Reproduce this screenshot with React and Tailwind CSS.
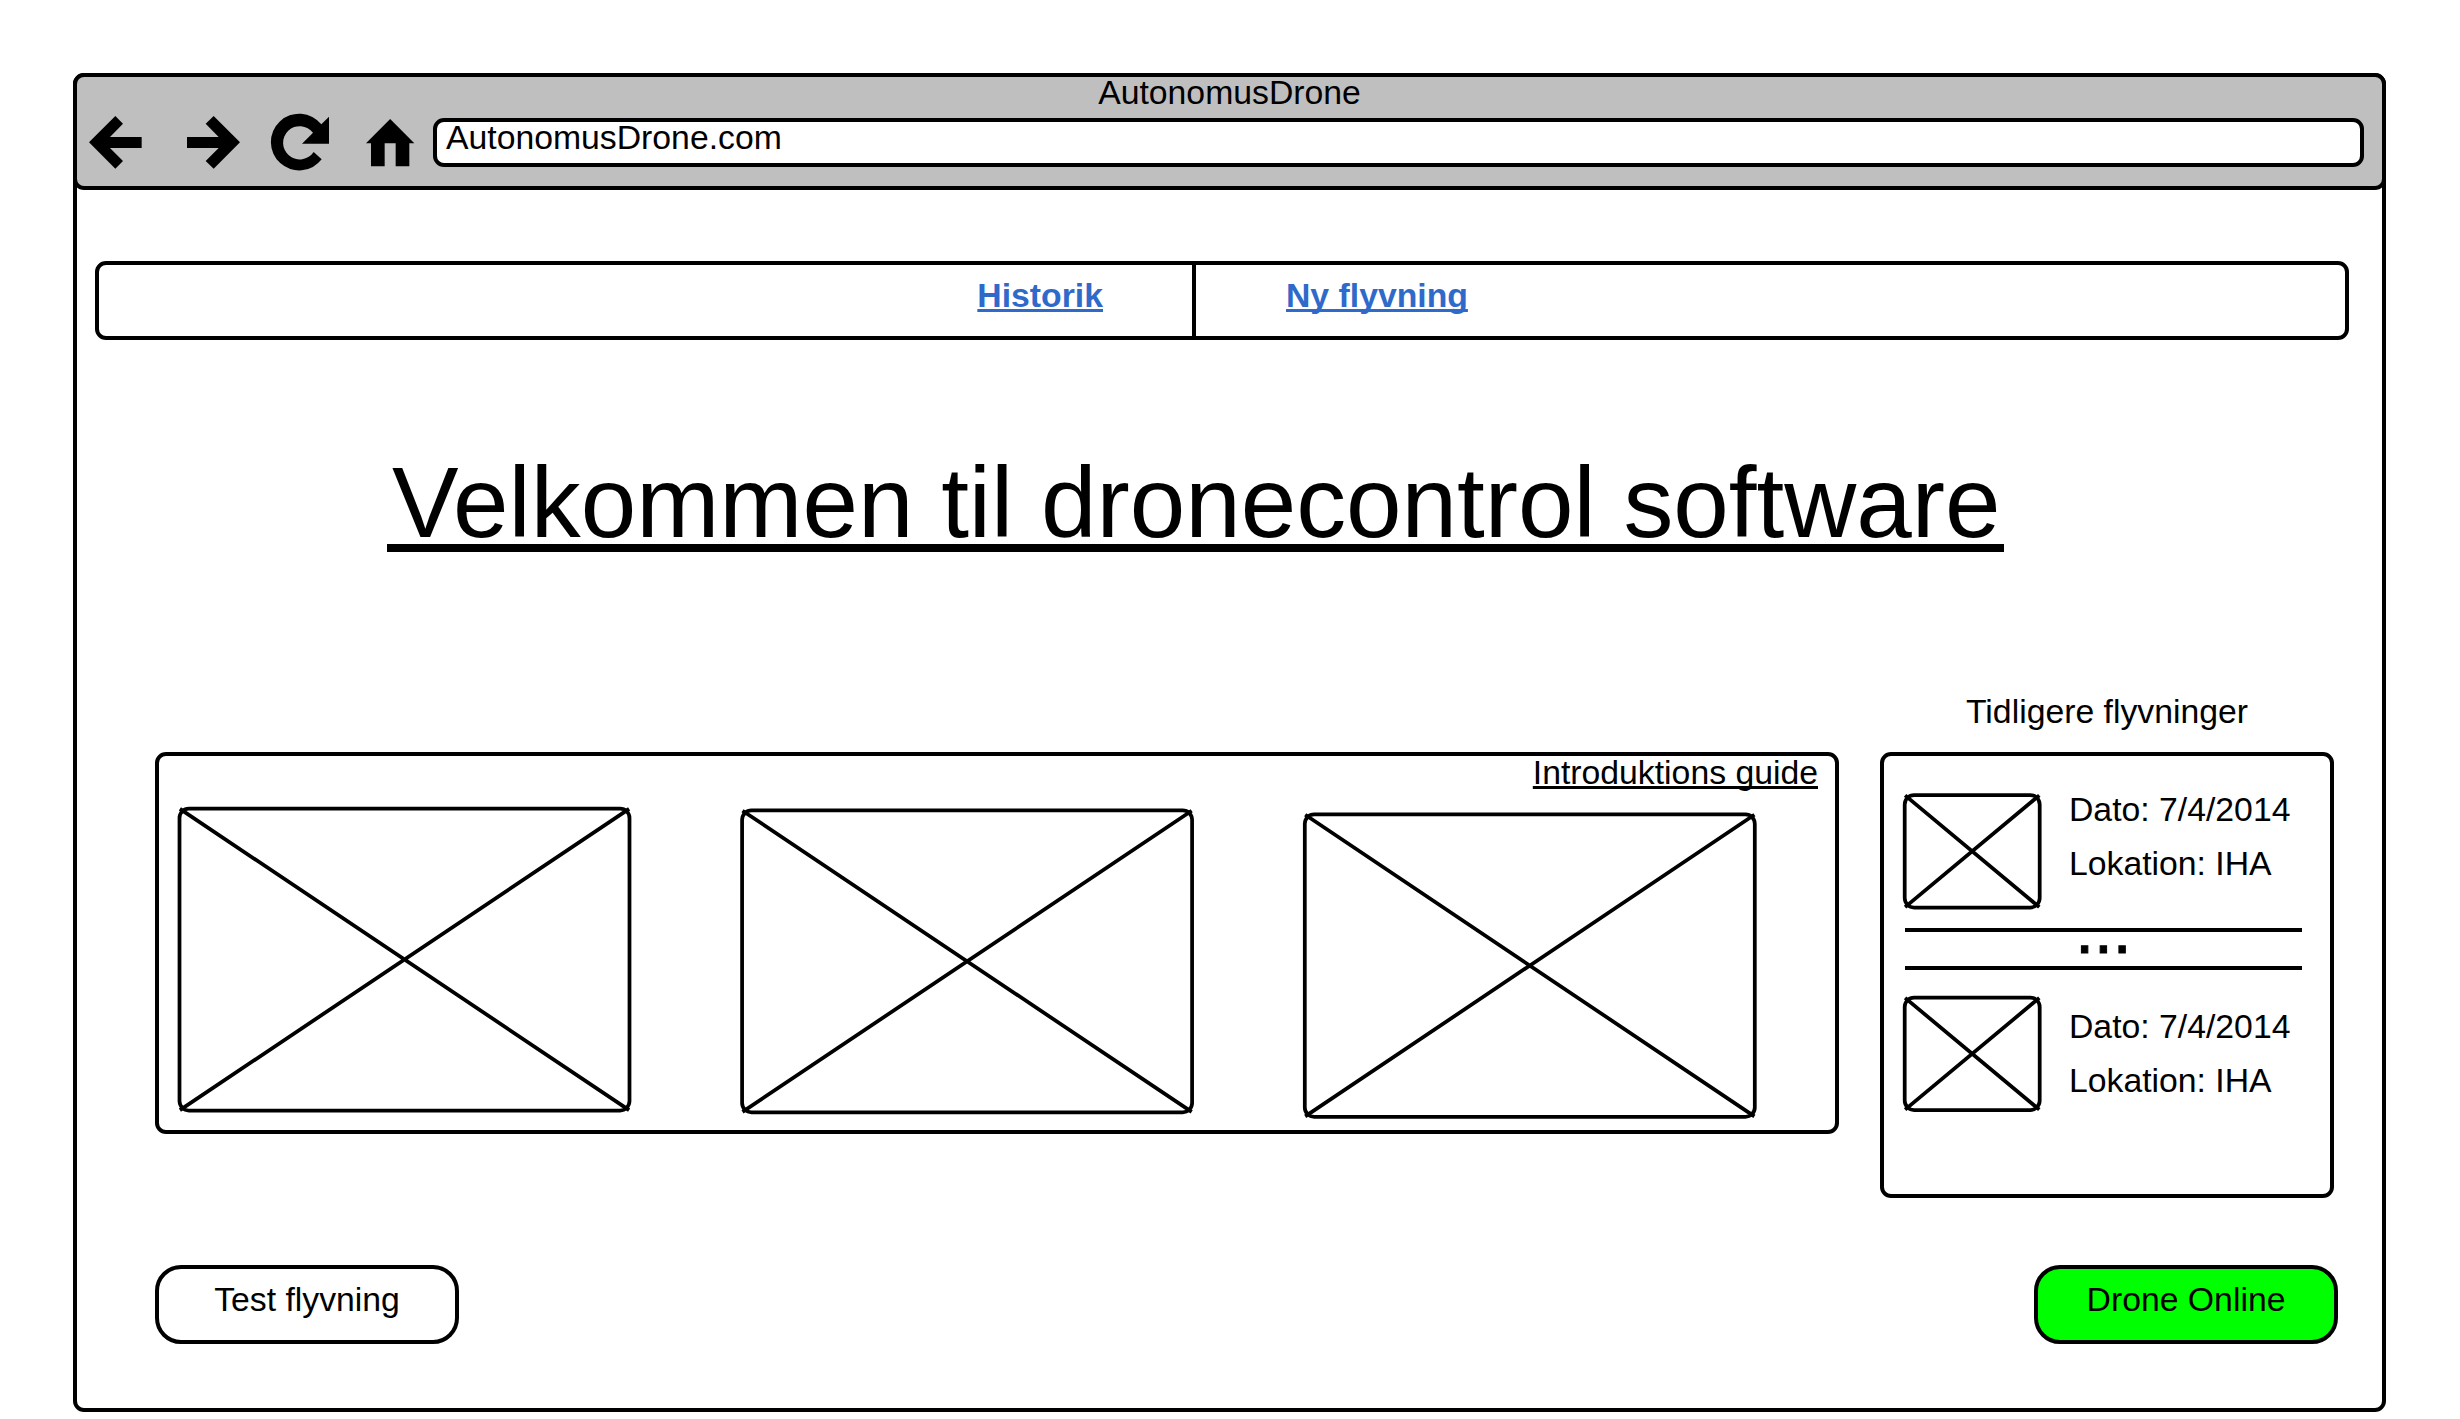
const glyphs = {
  back: {
    box: "88 168 158 158",
    d: "M88 247L167 168L190 191L151 231H246V264H151L190 303L167 326Z",
  },
  forward: {
    box: "381 168 159 158",
    d: "M540 247L461 168L437 191L476 231H381V264H476L437 303L461 326Z",
  },
  reload: {
    box: "633 162 174 171",
    d: "M785 298A85 85 0 1 1 784 193L807 170V251H726L759 218A50 50 0 1 0 761 276Z",
  },
  home: {
    box: "916 176 145 142",
    d: "M988.5 176L1061 249H1046V318H1005V249H972V318H931V249H916Z",
  },
};

function Glyph({ name, className }) {
  return (
    <svg viewBox={glyphs[name].box} className={`shrink-0 overflow-visible ${className}`}>
      <path d={glyphs[name].d} />
    </svg>
  );
}

/* Wireframe picture: rounded frame crossed by two diagonals. */
function Placeholder({ w, h, x, y, className }) {
  const left = x + 0.4;
  const top = y + 0.4;
  const right = x + w - 0.4;
  const bottom = y + h - 0.4;
  return (
    <svg
      fill="none"
      stroke="#000"
      strokeWidth="3.75"
      className={`shrink-0 overflow-visible ${className}`}
    >
      <rect x={x} y={y} width={w} height={h} rx="9.4" />
      <path d={`M${left} ${top}L${right} ${bottom}M${right} ${top}L${left} ${bottom}`} />
    </svg>
  );
}

function Header() {
  return (
    <header className="-mx-1 -mt-1 h-[117px] rounded-[11px] border-4 border-black bg-[#bfbfbf]">
      <div className="text-center leading-[30px]">AutonomusDrone</div>
      <div className="mt-[7px] flex h-[57px] items-center pl-[12.33px]">
        <Glyph name="back" className="h-[52.67px] w-[52.67px]" />
        <Glyph name="forward" className="ml-[45px] h-[52.67px] w-[53px]" />
        <Glyph name="reload" className="ml-[31px] h-[57px] w-[58px]" />
        <Glyph name="home" className="ml-[36.7px] h-[47.33px] w-[48.33px]" />
        <div className="ml-[19px] h-[49px] w-[1931px] shrink-0 rounded-[11px] border-4 border-black bg-white pl-[9px] leading-[30px]">
          AutonomusDrone.com
        </div>
      </div>
    </header>
  );
}

function Nav() {
  return (
    <nav className="mt-[71px] ml-[18px] flex h-[79px] w-[2254px] rounded-[11px] border-4 border-black font-bold text-[#2f6acb]">
      <div className="flex w-[1097px] justify-end border-r-4 border-black pt-[10px] pr-[89px]">
        <a className="underline decoration-[3.4px] underline-offset-[2px] [text-decoration-skip-ink:none]">
          Historik
        </a>
      </div>
      <div className="flex pt-[10px] pl-[90px]">
        <a className="underline decoration-[3.4px] underline-offset-[2px] [text-decoration-skip-ink:none]">
          Ny flyvning
        </a>
      </div>
    </nav>
  );
}

function Guide() {
  return (
    <section className="mt-[61px] h-[382px] w-[1684px] rounded-[11px] border-4 border-black">
      <div className="mt-px pr-[17px] text-right leading-[30px] underline decoration-[2.5px] underline-offset-[2px] [text-decoration-skip-ink:none]">
        Introduktions guide
      </div>
      <div className="flex items-start gap-[109px] pl-[18px]">
        <Placeholder w={450} h={302} x={2.5} y={2.5} className="mt-[19px] h-[306px] w-[454px]" />
        <Placeholder w={450} h={302} x={2.1} y={2.3} className="mt-[21px] h-[306px] w-[454px]" />
        <Placeholder w={450} h={302.5} x={1.8} y={2.3} className="mt-[25px] h-[306px] w-[454px]" />
      </div>
    </section>
  );
}

function FlightText({ className }) {
  return (
    <div className={`ml-[27px] leading-[54px] whitespace-nowrap ${className}`}>
      <div>Dato: 7/4/2014</div>
      <div>Lokation: IHA</div>
    </div>
  );
}

function Flights() {
  return (
    <aside className="ml-[41px] w-[454px]">
      <div className="text-center">Tidligere flyvninger</div>
      <div className="mt-[21px] h-[446px] rounded-[11px] border-4 border-black pt-[26px] pl-[18px]">
        <div className="flex h-[128px] items-start">
          <Placeholder w={135} h={112.5} x={2.7} y={2} className="mt-[11px] h-[117px] w-[140px]" />
          <FlightText className="" />
        </div>
        <div className="mt-[18px] ml-[3px] h-[42px] w-[397px] border-y-4 border-black text-center text-[67.5px] leading-[0px]">
          <div className="-mt-[2.5px] [-webkit-text-stroke:1px_black]">...</div>
        </div>
        <div className="mt-[25px] flex h-[117px] items-start">
          <Placeholder w={135} h={112.5} x={2.7} y={2.5} className="h-[117px] w-[140px]" />
          <FlightText className="mt-[4px]" />
        </div>
      </div>
    </aside>
  );
}

export default function App() {
  return (
    <div className="h-[1419px] w-[2460px] overflow-hidden bg-white pt-[73px] pl-[73px] font-['Liberation_Sans',Arial,sans-serif] text-[33.75px] leading-[40px] text-black">
      <div className="h-[1339px] w-[2313px] rounded-[11px] border-4 border-black">
        <Header />
        <Nav />
        <h1 className="mt-[121px] ml-[310px] h-[91px] w-[1617px] border-b-8 border-black pl-[5px] text-[99.8px] leading-[83px] whitespace-nowrap">
          Velkommen til dronecontrol software
        </h1>
        <div className="mt-[139px] flex items-start pl-[78px]">
          <Guide />
          <Flights />
        </div>
        <div className="mt-[67px] flex justify-between pr-[44px] pl-[78px]">
          <button className="flex h-[79px] w-[304px] items-start justify-center rounded-[26px] border-4 border-black bg-white pt-[10px]">
            Test flyvning
          </button>
          <button className="flex h-[79px] w-[304px] items-start justify-center rounded-[26px] border-4 border-black bg-[#00ff00] pt-[10px]">
            Drone Online
          </button>
        </div>
      </div>
    </div>
  );
}
